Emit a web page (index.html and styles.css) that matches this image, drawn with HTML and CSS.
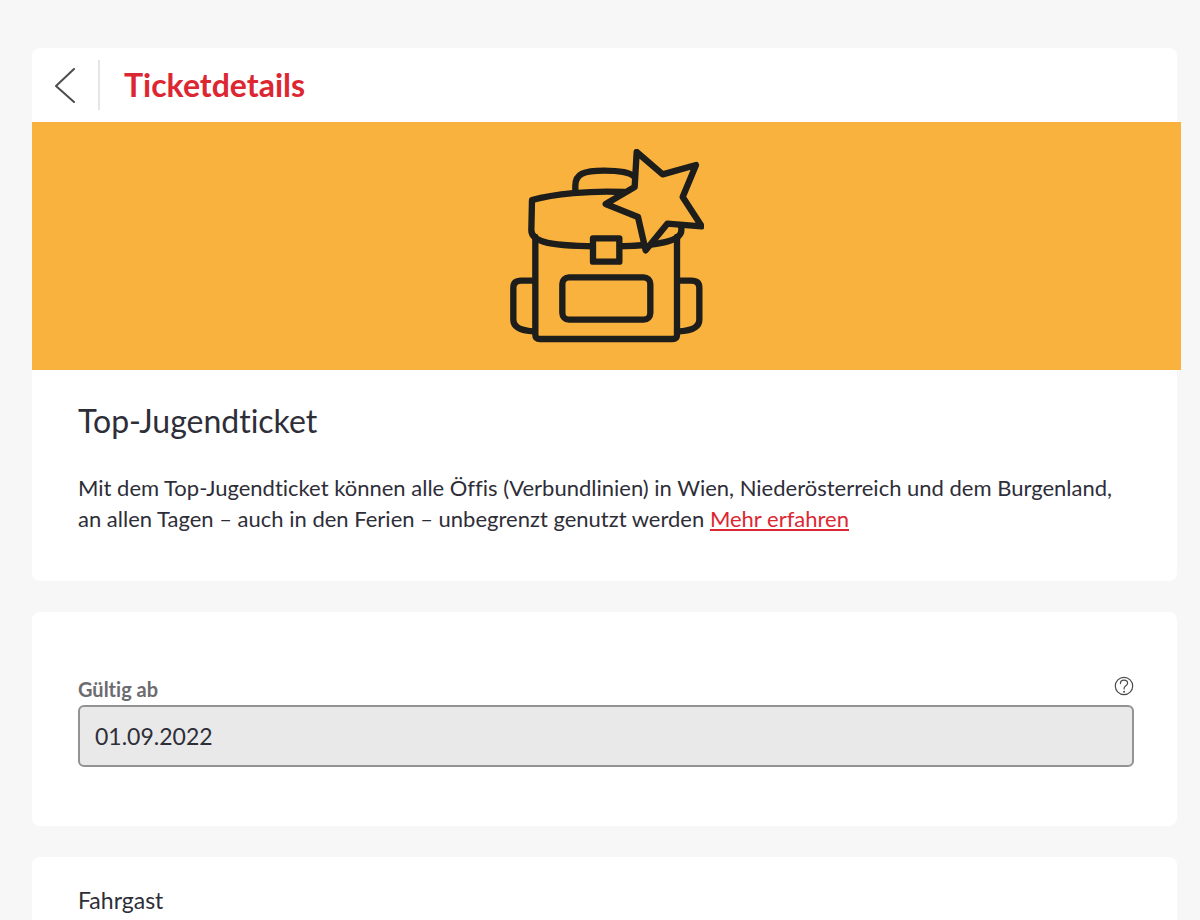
FILE: index.html
```html
<!DOCTYPE html>
<html lang="de">
<head>
<meta charset="utf-8">
<meta name="viewport" content="width=device-width, initial-scale=1">
<title>Ticketdetails</title>
<link rel="stylesheet" href="styles.css">
</head>
<body>
<main class="page">
  <section class="card">
    <header class="card-header">
      <button class="back" type="button" aria-label="Zurück">
        <svg width="20" height="36" viewBox="0 0 20 36" fill="none" stroke="#4c4c4f" stroke-width="2" stroke-linecap="round" stroke-linejoin="round"><path d="M19 2 1 19l18 16"/></svg>
      </button>
      <h1 class="title">Ticketdetails</h1>
    </header>
    <div class="banner">
      <svg class="bag" viewBox="30 26 582 582" fill="none" stroke="#1d1d1b" stroke-width="19" stroke-linecap="round" stroke-linejoin="round" aria-hidden="true">
        <path d="M106 290V583Q106 596 120 596H517Q531 596 531 583V290"/>
        <path d="M102 421H64Q40 421 40 442V538C40 562 64 571 102 573"/>
        <path d="M536 421H574Q598 421 598 442V538C598 562 574 571 536 573"/>
        <path d="M226 150V137C226 100 252 91 312 91C362 91 390 97 402 108"/>
        <path d="M544 256V270C544 300 490 318 319 318C150 318 94 306 94 270L96 179C160 161 270 150 372 155"/>
        <rect x="187" y="411" width="264" height="127" rx="20"/>
        <path d="M279 294h79v70h-79z" fill="#fab23f"/>
        <path d="M410 35 488 102 588 74 548 170 605 258 502 250 437 330 414 230 317 191 404 140Z" fill="#fab23f"/>
      </svg>
    </div>
    <div class="intro">
      <h2 class="name">Top-Jugendticket</h2>
      <p class="text">Mit dem Top-Jugendticket können alle Öffis (Verbundlinien) in Wien, Niederösterreich und dem Burgenland, an allen Tagen – auch in den Ferien – unbegrenzt genutzt werden <a class="more" href="#">Mehr erfahren</a></p>
    </div>
  </section>

  <section class="card validity">
    <div class="label-row">
      <label class="label" for="valid-from">Gültig ab</label>
      <button class="help" type="button" aria-label="Hilfe">
        <svg width="20" height="20" viewBox="0 0 20 20" fill="none" stroke="#4c4c4f" stroke-width="1.2" stroke-linecap="round"><circle cx="10" cy="10" r="8.7"/><path d="M6.4 7.6C6.4 5.4 8 4.1 10 4.1s3.6 1.2 3.6 3.1c0 2.5-3.5 2.6-3.5 5.1v.7"/><circle cx="10.1" cy="15.7" r=".4" fill="#4c4c4f"/></svg>
      </button>
    </div>
    <input class="field" id="valid-from" type="text" value="01.09.2022" readonly>
  </section>

  <section class="card passenger">
    <h2 class="section-title">Fahrgast</h2>
  </section>
</main>
</body>
</html>
```
FILE: styles.css
```css
* {
  box-sizing: border-box;
}

body {
  margin: 0;
  background: #f7f7f7;
  color: #2e2e38;
  font-family: Lato, "Liberation Sans", sans-serif;
  font-size: 22px;
  font-variant-ligatures: none;
  line-height: 31px;
}

h1, h2, p {
  margin: 0;
  font-weight: 400;
}

button {
  display: flex;
  padding: 0;
  border: 0;
  background: none;
  cursor: pointer;
}

.page {
  display: flex;
  flex-direction: column;
  gap: 31px;
  padding: 48px 23px 0 32px;
}

.card {
  background: #fff;
  border-radius: 8px;
}

.card-header {
  display: flex;
  align-items: center;
  height: 74px;
}

.back {
  align-items: center;
  width: 68px;
  height: 50px;
  padding-left: 23px;
  border-right: 2px solid #e6e6e6;
}

.title {
  padding-left: 24px;
  color: #dc2733;
  font-size: 32px;
  font-weight: 700;
  line-height: 40px;
}

.banner {
  display: flex;
  align-items: center;
  justify-content: center;
  height: 248px;
  margin-right: -4px;
  background: #fab23f;
}

.bag {
  width: 194px;
  height: 194px;
}

.intro {
  padding: 31px 43px 47px 46px;
}

.name {
  margin-bottom: 31px;
  font-size: 32px;
  line-height: 40px;
}

.more {
  color: #dc2733;
  text-decoration-thickness: 2px;
  text-underline-offset: 2px;
}

.validity {
  padding: 64px 43px 59px 46px;
}

.label-row {
  display: flex;
  align-items: flex-start;
  justify-content: space-between;
  height: 29px;
}

.label {
  color: #6c6c70;
  font-size: 20px;
  font-weight: 700;
  line-height: 26px;
}

.field {
  display: block;
  width: 100%;
  height: 62px;
  padding: 0 15px;
  border: 2px solid #939393;
  border-radius: 6px;
  background: #e9e9e9;
  color: inherit;
  font: inherit;
  font-size: 23px;
}

.passenger {
  padding: 28px 46px 48px;
}

.section-title {
  font-size: 23px;
}
```
